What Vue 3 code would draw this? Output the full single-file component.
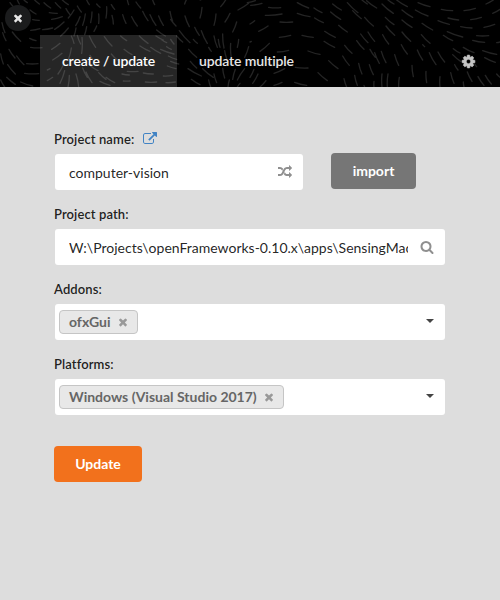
<script setup>
import { ref } from 'vue'

const icons = {
  close: 'M1490 1322q0 40-28 68l-136 136q-28 28-68 28t-68-28l-294-294-294 294q-28 28-68 28t-68-28l-136-136q-28-28-28-68t28-68l294-294-294-294q-28-28-28-68t28-68l136-136q28-28 68-28t68 28l294 294 294-294q28-28 68-28t68 28l136 136q28 28 28 68t-28 68l-294 294 294 294q28 28 28 68z',
  cog: 'M1152 896q0-106-75-181t-181-75-181 75-75 181 75 181 181 75 181-75 75-181zm512-109v222q0 12-8 23t-20 13l-185 28q-19 54-39 91 35 50 107 138 10 12 10 25t-9 23q-27 37-99 108t-94 71q-12 0-26-9l-138-108q-44 23-91 38-16 136-29 186-7 28-36 28h-222q-14 0-24.5-8.5t-11.5-21.5l-28-184q-49-16-90-37l-141 107q-10 9-25 9-14 0-25-11-126-114-165-168-7-10-7-23 0-12 8-23 15-21 51-66.5t54-70.5q-27-50-41-99l-183-27q-13-2-21-12.5t-8-23.5v-222q0-12 8-23t19-13l186-28q14-46 39-92-40-57-107-138-10-12-10-24 0-10 9-23 26-36 98.5-107.5t94.5-71.5q13 0 26 10l138 107q44-23 91-38 16-136 29-186 7-28 36-28h222q14 0 24.5 8.5t11.5 21.5l28 184q49 16 90 37l142-107q9-9 24-9 13 0 25 10 129 119 165 170 7 8 7 22 0 12-8 23-15 21-51 66.5t-54 70.5q26 50 41 98l183 28q13 2 21 12.5t8 23.5z',
  search: 'M1216 832q0-185-131.5-316.5t-316.5-131.5-316.5 131.5-131.5 316.5 131.5 316.5 316.5 131.5 316.5-131.5 131.5-316.5zm512 832q0 52-38 90t-90 38q-54 0-90-38l-343-342q-179 124-399 124-143 0-273.5-55.5t-225-150-150-225-55.5-273.5 55.5-273.5 150-225 225-150 273.5-55.5 273.5 55.5 225 150 150 225 55.5 273.5q0 220-124 399l343 343q37 37 37 90z',
  external: 'M1408 928v320q0 119-84.5 203.5t-203.5 84.5h-832q-119 0-203.5-84.5t-84.5-203.5v-832q0-119 84.5-203.5t203.5-84.5h704q14 0 23 9t9 23v64q0 14-9 23t-23 9h-704q-66 0-113 47t-47 113v832q0 66 47 113t113 47h832q66 0 113-47t47-113v-320q0-14 9-23t23-9h64q14 0 23 9t9 23zm384-864v512q0 26-19 45t-45 19-45-19l-176-176-652 652q-10 10-23 10t-23-10l-114-114q-10-10-10-23t10-23l652-652-176-176q-19-19-19-45t19-45 45-19h512q26 0 45 19t19 45z',
  random: 'M666 481q-60 92-137 273-22-45-37-72.5t-40.5-63.5-51-56.5-63-35-81.5-14.5h-224q-14 0-23-9t-9-23v-192q0-14 9-23t23-9h224q250 0 410 225zm1126 799q0 14-9 23l-320 320q-9 9-23 9-13 0-22.5-9.5t-9.5-22.5v-192q-32 0-85 .5t-81 1-73-1-71-5-64-10.5-63-18.5-58-28.5-59-40-55-53.5-56-69.5q59-93 136-273 22 45 37 72.5t40.5 63.5 51 56.5 63 35 81.5 14.5h256v-192q0-14 9-23t23-9q12 0 24 10l319 319q9 9 9 23zm0-896q0 14-9 23l-320 320q-9 9-23 9-13 0-22.5-9.5t-9.5-22.5v-192h-256q-48 0-87 15t-69 45-51 61.5-45 77.5q-32 62-78 171-29 66-49.5 111t-54 105-64 100-74 83-90 68.5-106.5 42-128 16.5h-224q-14 0-23-9t-9-23v-192q0-14 9-23t23-9h224q48 0 87-15t69-45 51-61.5 45-77.5q32-62 78-171 29-66 49.5-111t54-105 64-100 74-83 90-68.5 106.5-42 128-16.5h256v-192q0-14 9-23t23-9q12 0 24 10l319 319q9 9 9 23z',
}

const tabs = ['create / update', 'update multiple']
const activeTab = ref(0)
const projectName = ref('computer-vision')
const projectPath = ref('W:\\Projects\\openFrameworks-0.10.x\\apps\\SensingMachines')
const selects = [
  { label: 'Addons:', value: 'ofxGui' },
  { label: 'Platforms:', value: 'Windows (Visual Studio 2017)' },
]

// Flow-field strokes of the header: x1, y1, x2, y2
const strokes = [
  [6, 68, 15, 98], [30, 8, 40, 20], [52, 0, 58, 12], [72, 0, 82, 8], [102, -2, 118, 12], [90, 30, 108, 42], [98, 59, 118, 61],
  [8, 98, 18, 122], [37, 96, 62, 124], [92, 91, 120, 86], [89, 115, 108, 122], [92, 142, 126, 143],
  [27, 148, 45, 174], [2, 162, 10, 192], [50, 168, 72, 194], [80, 191, 114, 191], [23, 194, 46, 222], [74, 220, 116, 221], [20, 232, 46, 253], [62, 246, 98, 258], [2, 240, 14, 261],
  [132, 8, 152, 24], [166, 8, 182, 24], [187, 0, 205, 14], [148, 38, 172, 40], [155, 58, 187, 50], [128, 89, 158, 84], [164, 88, 192, 66], [182, 108, 205, 84], [205, 54, 222, 30], [198, 26, 210, 44],
  [232, 18, 244, 36], [227, 77, 240, 50], [248, 76, 256, 42], [260, 0, 268, 14], [272, 68, 276, 36], [290, 12, 300, 22], [296, 70, 296, 42], [318, 54, 320, 20], [334, 14, 344, 28], [340, 72, 336, 46],
  [222, 108, 228, 84], [254, 104, 260, 80], [282, 94, 290, 78],
  [155, 148, 180, 130], [158, 180, 186, 160], [142, 210, 150, 206], [174, 222, 190, 194], [206, 176, 214, 144], [222, 130, 214, 108], [245, 160, 246, 112], [232, 106, 242, 132], [268, 108, 287, 142], [270, 166, 290, 194],
  [142, 242, 158, 232], [180, 250, 194, 212], [204, 261, 208, 226], [236, 261, 228, 222], [258, 216, 276, 248], [296, 218, 318, 238], [272, 198, 294, 212], [248, 204, 262, 232], [300, 244, 330, 256],
  [313, 110, 336, 138], [334, 162, 352, 180], [362, 108, 380, 122], [372, 148, 396, 164], [418, 108, 444, 130], [420, 138, 450, 154], [452, 142, 482, 160],
  [382, 0, 386, 14], [368, 44, 378, 70], [395, 50, 412, 78], [408, 6, 422, 24], [428, 34, 444, 62], [450, 44, 468, 76], [458, 0, 464, 14], [470, 90, 496, 108], [476, 48, 490, 76], [510, 34, 518, 64], [512, 58, 528, 78],
  [318, 232, 344, 248], [370, 243, 390, 243], [366, 222, 388, 225], [382, 214, 414, 214], [430, 219, 460, 222], [436, 246, 470, 246], [490, 228, 518, 226], [498, 248, 526, 246],
  [468, 108, 490, 120], [486, 120, 500, 128], [512, 118, 522, 132], [530, 108, 548, 126], [482, 148, 522, 162], [500, 140, 514, 148], [505, 168, 530, 178], [502, 198, 528, 206], [512, 184, 536, 192],
  [538, 92, 570, 128], [555, 48, 568, 80], [560, -2, 554, 12], [600, 54, 606, 22], [642, 76, 648, 42], [602, 0, 588, -4], [662, 20, 678, -2], [675, 66, 690, 40], [714, 30, 746, 10], [698, 96, 710, 66],
  [584, 82, 598, 106], [604, 92, 622, 130], [580, 118, 592, 130], [566, 148, 590, 172], [642, 108, 652, 142], [655, 118, 660, 142], [668, 102, 672, 144], [626, 142, 634, 154], [692, 130, 694, 174], [712, 142, 716, 118], [734, 172, 746, 140], [674, 152, 680, 176],
  [564, 206, 604, 228], [571, 184, 590, 204], [574, 238, 600, 254], [608, 206, 640, 232], [626, 240, 632, 261], [642, 222, 650, 248], [668, 205, 674, 234], [688, 240, 684, 261], [706, 208, 698, 238], [734, 206, 712, 240], [720, 250, 712, 261],
  [742, 8, 766, 2], [752, 16, 786, 10], [806, 22, 842, 23], [796, 46, 846, 42], [840, 66, 878, 66], [750, 72, 764, 62], [776, 94, 804, 78], [780, 154, 808, 130], [838, 112, 872, 106], [832, 156, 866, 151], [750, 126, 754, 124], [750, 232, 762, 208], [758, 250, 774, 222], [780, 261, 798, 242],
  [892, 8, 926, 24], [892, 40, 930, 50], [906, 106, 940, 112], [924, 153, 960, 163], [822, 220, 854, 206], [886, 202, 924, 204], [954, 218, 982, 242], [884, 247, 920, 256], [822, 256, 846, 247],
  [942, 24, 966, 38], [944, 54, 970, 68], [974, 94, 1006, 112], [972, 124, 1004, 142], [986, 182, 1014, 206], [998, 12, 1024, 30], [992, 36, 1022, 58], [1016, 76, 1042, 96],
  [1034, 136, 1056, 160], [1028, 168, 1048, 196], [1042, 8, 1074, 38], [1058, 32, 1084, 56], [1084, -2, 1102, 12], [1070, 122, 1092, 148], [1082, 102, 1104, 128], [1104, 96, 1124, 124], [1094, 52, 1120, 78], [1100, 2, 1130, 24],
  [1110, 148, 1126, 172], [1124, 158, 1138, 190], [1144, 154, 1158, 188], [1148, 104, 1166, 132], [1158, 78, 1184, 106], [1156, 52, 1182, 74], [1146, 12, 1180, 40], [1164, 0, 1182, 12], [1076, 190, 1086, 222], [1108, 194, 1120, 224],
  [1032, 236, 1040, 261], [1064, 226, 1072, 256], [1092, 256, 1094, 261], [1122, 244, 1122, 261], [1146, 222, 1146, 261], [1164, 222, 1162, 261], [1198, 232, 1196, 261], [1184, 164, 1196, 196], [1204, 134, 1222, 162], [1206, 96, 1232, 124], [1206, 60, 1236, 82], [1206, 30, 1238, 52], [1190, 0, 1222, 20],
  [1236, 196, 1240, 230], [1278, 214, 1280, 248], [1320, 230, 1320, 261], [1252, 150, 1268, 180], [1288, 158, 1308, 194], [1314, 156, 1334, 186], [1264, 104, 1290, 130], [1268, 134, 1274, 140], [1266, 70, 1298, 90], [1246, 30, 1284, 48], [1254, 8, 1290, 20],
  [1324, 28, 1358, 32], [1344, 54, 1376, 60], [1314, 62, 1348, 73], [1342, 95, 1388, 111], [1330, 106, 1358, 122], [1392, 32, 1426, 25], [1412, 59, 1444, 52], [1382, 80, 1416, 84], [1452, 82, 1484, 73], [1458, 12, 1480, 0], [1478, 40, 1500, 28],
  [1430, 107, 1466, 107], [1418, 121, 1454, 127], [1490, 128, 1500, 126], [1360, 146, 1380, 159], [1390, 142, 1422, 158], [1448, 152, 1490, 163], [1454, 173, 1486, 187], [1358, 164, 1382, 184], [1364, 194, 1374, 210], [1352, 218, 1362, 250], [1402, 216, 1416, 244], [1390, 246, 1392, 261], [1424, 192, 1430, 200], [1434, 230, 1452, 256], [1456, 226, 1474, 252], [1490, 222, 1500, 232],
]
const strokePath = strokes.map(([a, b, c, d]) => {
  const mx = (a + c) / 2 - (d - b) * 0.06
  const my = (b + d) / 2 + (c - a) * 0.06
  return `M${a} ${b}Q${mx} ${my} ${c} ${d}`
}).join('')
</script>

<template>
  <div class="window">
    <header class="header">
      <svg class="pattern" viewBox="0 0 1500 261" preserveAspectRatio="none" aria-hidden="true">
        <path :d="strokePath" />
      </svg>
      <button class="quit" aria-label="Close">
        <svg viewBox="0 0 1792 1792"><path :d="icons.close" /></svg>
      </button>
      <nav class="tabs">
        <a
          v-for="(tab, i) in tabs"
          :key="tab"
          class="tab"
          :class="{ active: i === activeTab }"
          @click="activeTab = i"
        >{{ tab }}</a>
        <button class="settings" aria-label="Settings">
          <svg viewBox="0 0 1792 1792"><path :d="icons.cog" /></svg>
        </button>
      </nav>
    </header>

    <main class="form">
      <section class="field">
        <label class="label">Project name:
          <svg class="external" viewBox="0 0 1792 1792"><path :d="icons.external" /></svg>
        </label>
        <div class="row">
          <div class="box name">
            <input v-model="projectName" class="input" spellcheck="false">
            <svg class="box-icon" viewBox="0 0 1792 1792"><path :d="icons.random" /></svg>
          </div>
          <button class="button import">import</button>
        </div>
      </section>

      <section class="field">
        <label class="label">Project path:</label>
        <div class="box">
          <input v-model="projectPath" class="input" spellcheck="false">
          <svg class="box-icon" viewBox="0 0 1792 1792"><path :d="icons.search" /></svg>
        </div>
      </section>

      <section v-for="s in selects" :key="s.label" class="field">
        <label class="label">{{ s.label }}</label>
        <div class="box select">
          <span class="chip">{{ s.value }}
            <svg viewBox="0 0 1792 1792"><path :d="icons.close" /></svg>
          </span>
          <i class="caret"></i>
        </div>
      </section>

      <button class="button update">Update</button>
    </main>
  </div>
</template>

<style>
body {
  margin: 0;
  background: #ddd;
}
</style>

<style scoped>
.window {
  width: 500px;
  height: 600px;
  overflow: hidden;
  background: #ddd;
  font-family: Lato, "Liberation Sans", sans-serif;
  font-size: 14px;
  color: rgba(0, 0, 0, 0.87);
}
.window * {
  box-sizing: border-box;
}
svg {
  display: block;
  fill: currentColor;
}
button {
  padding: 0;
  border: 0;
  font: inherit;
}
.header {
  position: relative;
  display: flex;
  align-items: flex-end;
  height: 87px;
  background: #000;
}
.pattern {
  position: absolute;
  inset: 0;
  width: 100%;
  height: 100%;
}
.pattern path {
  fill: none;
  stroke: #242424;
  stroke-width: 4;
  stroke-linecap: round;
}
.quit {
  position: absolute;
  left: 5px;
  top: 5px;
  display: flex;
  align-items: center;
  justify-content: center;
  width: 26px;
  height: 26px;
  border-radius: 50%;
  background: #1b1c1d;
  color: #e6e6e6;
}
.quit svg {
  width: 12px;
  height: 12px;
}
.tabs {
  position: relative;
  display: flex;
  flex: 1;
  height: 52px;
  padding: 0 24px 0 40px;
}
.tab {
  display: flex;
  align-items: center;
  width: 137px;
  padding: 0 0 2px 22px;
  color: #e6e6e6;
  font-weight: 600;
  letter-spacing: -0.13px;
  white-space: nowrap;
}
.tab.active {
  background: rgba(255, 255, 255, 0.15);
  color: #fff;
}
.settings {
  margin-left: auto;
  background: none;
  color: #c4c4c4;
}
.settings svg {
  width: 15px;
  height: 15px;
  stroke: currentColor;
  stroke-width: 70;
}
.form {
  padding: 43px 55px 0;
}
.field {
  height: 75px;
}
.label {
  display: flex;
  align-items: center;
  gap: 9px;
  height: 18px;
  margin: 0 0 6px -1px;
  font-size: 13px;
  font-weight: 600;
  letter-spacing: 0.1px;
}
.external {
  width: 14px;
  height: 14px;
  color: #4183c4;
}
.row {
  display: flex;
  gap: 28px;
}
.box {
  display: flex;
  align-items: center;
  height: 36px;
  padding: 0 11px 0 14px;
  border-radius: 3px;
  background: #fff;
}
.box.name {
  width: 248px;
}
.input {
  flex: 1;
  min-width: 0;
  height: 34px;
  margin-right: 12px;
  padding: 0;
  border: 0;
  outline: 0;
  background: none;
  font: inherit;
  color: inherit;
}
.box-icon {
  width: 14px;
  height: 14px;
  color: #8f8f8f;
}
.box.select {
  padding: 0 11px 0 4px;
  justify-content: space-between;
}
.chip {
  display: flex;
  align-items: center;
  gap: 6px;
  height: 24px;
  padding: 0 8px 2px 9px;
  border: 1px solid #c5c5c5;
  border-radius: 4px;
  background: #e8e8e8;
  color: #666;
  font-weight: 700;
}
.chip svg {
  width: 12px;
  height: 12px;
  margin-top: 2px;
  color: #999;
}
.caret {
  margin-top: -2px;
  border: 4.5px solid transparent;
  border-top-color: #444;
  border-bottom: 0;
}
.button {
  height: 36px;
  padding-bottom: 2px;
  border-radius: 4px;
  color: #fff;
  font-weight: 700;
}
.import {
  width: 85px;
  margin-top: -1px;
  background: #767676;
}
.update {
  width: 88px;
  margin: 16px 0 0 -1px;
  background: #f2711c;
}
</style>
